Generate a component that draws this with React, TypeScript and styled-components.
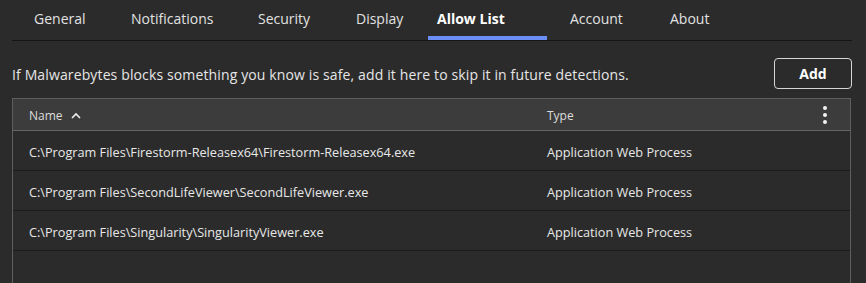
import React from "react";
import styled, { createGlobalStyle } from "styled-components";

const Global = createGlobalStyle`
  html, body { margin: 0; padding: 0; background: #2b2b2b; }
  body { font-family: "Open Sans", "Noto Sans", sans-serif; color: #e4e4e4; }
  * { box-sizing: border-box; }
`;

const Page = styled.div`
  width: 866px;
  height: 283px;
  overflow: hidden;
  background: #2b2b2b;
  padding: 0 14px 0 12px;
  display: flex;
  flex-direction: column;
`;

const TabBar = styled.div`
  display: flex;
  height: 41px;
  border-bottom: 1px solid #151515;
`;

const Tab = styled.div<{ $w: number; $pl: number; $active?: boolean }>`
  width: ${(p) => p.$w}px;
  padding-left: ${(p) => p.$pl}px;
  height: 40px;
  display: flex;
  align-items: center;
  padding-top: 1px;
  font-size: 14px;
  font-weight: ${(p) => (p.$active ? 700 : 400)};
  color: ${(p) => (p.$active ? "#ffffff" : "#e2e2e2")};
  border-bottom: 4px solid ${(p) => (p.$active ? "#6b8ef4" : "transparent")};
  white-space: nowrap;
`;

const Toolbar = styled.div`
  display: flex;
  align-items: center;
  justify-content: space-between;
  margin-top: 17px;
  height: 31px;
`;

const Description = styled.p`
  margin: 0;
  padding-top: 2px;
  font-size: 14px;
  letter-spacing: 0.13px;
  color: #e6e6e6;
`;

const AddButton = styled.button`
  width: 78px;
  height: 31px;
  background: transparent;
  border: 1px solid #d6d6d6;
  border-radius: 4px;
  color: #ffffff;
  font-family: inherit;
  font-size: 14px;
  font-weight: 700;
`;

const Table = styled.div`
  margin-top: 9px;
  margin-right: 1px;
  flex: 1;
  border: 1px solid #5e5e5e;
  border-bottom: none;
  display: flex;
  flex-direction: column;
`;

const HeaderRow = styled.div`
  display: grid;
  grid-template-columns: 518px 1fr 50px;
  align-items: center;
  height: 32px;
  padding-top: 1px;
  background: #3c3c3c;
  border-bottom: 1px solid #666666;
  font-size: 12px;
  color: #dcdcdc;
`;

const HeaderCell = styled.div`
  display: flex;
  align-items: center;
  gap: 8px;
  padding-left: 16px;
`;

const Row = styled.div`
  display: grid;
  grid-template-columns: 518px 1fr 50px;
  align-items: center;
  height: 40px;
  padding-top: 2px;
  border-bottom: 1px solid #1b1b1b;
  font-size: 12.7px;
  color: #e8e8e8;
`;

const Cell = styled.div`
  padding-left: 16px;
  white-space: nowrap;
`;

const Kebab = styled.div`
  display: flex;
  flex-direction: column;
  align-items: center;
  gap: 3px;
`;

const Dot = styled.span`
  width: 4px;
  height: 4px;
  border-radius: 50%;
  background: #f2f2f2;
`;

const tabs = [
  { label: "General", w: 96, pl: 22 },
  { label: "Notifications", w: 127, pl: 23 },
  { label: "Security", w: 98, pl: 23 },
  { label: "Display", w: 95, pl: 23 },
  { label: "Allow List", w: 119, pl: 9, active: true },
  { label: "Account", w: 101, pl: 23 },
  { label: "About", w: 90, pl: 22 },
];

const rows = [
  "C:\\Program Files\\Firestorm-Releasex64\\Firestorm-Releasex64.exe",
  "C:\\Program Files\\SecondLifeViewer\\SecondLifeViewer.exe",
  "C:\\Program Files\\Singularity\\SingularityViewer.exe",
];

export default function App() {
  return (
    <>
      <Global />
      <Page>
        <TabBar>
          {tabs.map((t) => (
            <Tab key={t.label} $w={t.w} $pl={t.pl} $active={t.active}>
              {t.label}
            </Tab>
          ))}
        </TabBar>
        <Toolbar>
          <Description>
            If Malwarebytes blocks something you know is safe, add it here to skip it in future detections.
          </Description>
          <AddButton>Add</AddButton>
        </Toolbar>
        <Table>
          <HeaderRow>
            <HeaderCell>
              Name
              <svg width="10" height="7" viewBox="0 0 10 7">
                <path d="M1 6 L5 2 L9 6" fill="none" stroke="#f0f0f0" strokeWidth="1.6" />
              </svg>
            </HeaderCell>
            <HeaderCell>Type</HeaderCell>
            <Kebab>
              <Dot />
              <Dot />
              <Dot />
            </Kebab>
          </HeaderRow>
          {rows.map((r) => (
            <Row key={r}>
              <Cell>{r}</Cell>
              <Cell>Application Web Process</Cell>
              <span />
            </Row>
          ))}
        </Table>
      </Page>
    </>
  );
}
